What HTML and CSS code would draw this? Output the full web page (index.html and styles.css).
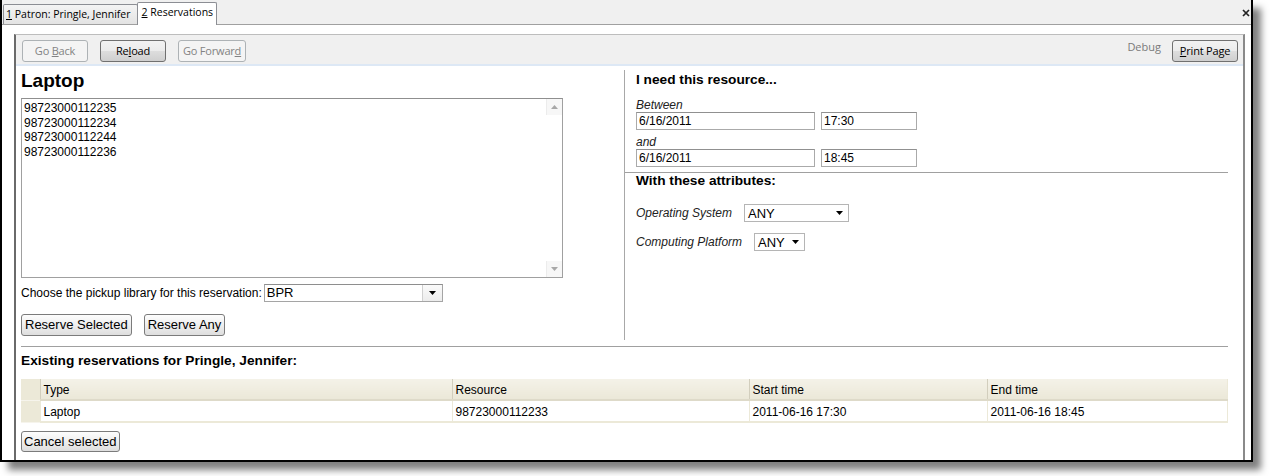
FILE: index.html
```html
<!DOCTYPE html>
<html>
<head>
<meta charset="utf-8">
<title>Reservations</title>
<link rel="stylesheet" href="styles.css">
</head>
<body>
<div class="window">
  <div class="tabstrip">
    <div class="tab"><u>1</u> Patron: Pringle, Jennifer</div>
    <div class="tab active"><u>2</u> Reservations</div>
    <svg class="close" width="8" height="8" viewBox="0 0 8 8"><path d="M1 1L7 7M7 1L1 7" stroke="#222" stroke-width="1.7" fill="none"/></svg>
  </div>
  <div class="browser">
    <div class="toolbar">
      <button class="tbtn" disabled>Go <u>B</u>ack</button>
      <button class="tbtn">Re<u>l</u>oad</button>
      <button class="tbtn" disabled>Go Forwar<u>d</u></button>
      <span class="spacer"></span>
      <span class="debug">Debug</span>
      <button class="tbtn print"><u>P</u>rint Page</button>
    </div>
    <div class="content">
      <div class="top">
        <div class="left">
          <h1 class="title">Laptop</h1>
          <div class="listbox">
            <div class="items">
              <div class="item">98723000112235</div>
              <div class="item">98723000112234</div>
              <div class="item">98723000112244</div>
              <div class="item">98723000112236</div>
            </div>
            <div class="vscroll">
              <span class="sarrow"><svg width="7" height="4" viewBox="0 0 7 4"><path d="M0 4L3.5 0L7 4Z" fill="#a8a8a8"/></svg></span>
              <span class="sarrow"><svg width="7" height="4" viewBox="0 0 7 4"><path d="M0 0L3.5 4L7 0Z" fill="#a8a8a8"/></svg></span>
            </div>
          </div>
          <div class="pickup">
            <span>Choose the pickup library for this reservation:</span>
            <div class="combo">
              <span class="combo-val">BPR</span>
              <span class="combo-btn"><svg width="7" height="4" viewBox="0 0 7 4"><path d="M0 0L3.5 4L7 0Z" fill="#000"/></svg></span>
            </div>
          </div>
          <div class="actions">
            <button class="btn">Reserve Selected</button>
            <button class="btn">Reserve Any</button>
          </div>
        </div>
        <div class="right">
          <h3 class="subhead">I need this resource...</h3>
          <div class="label">Between</div>
          <div class="fields">
            <input class="field date" value="6/16/2011" readonly>
            <input class="field time" value="17:30" readonly>
          </div>
          <div class="label and">and</div>
          <div class="fields">
            <input class="field date" value="6/16/2011" readonly>
            <input class="field time" value="18:45" readonly>
          </div>
          <div class="rule-right"></div>
          <h3 class="subhead attrs">With these attributes:</h3>
          <div class="attr os">
            <span class="label">Operating System</span>
            <div class="sel sel-os"><span>ANY</span><svg width="7" height="4" viewBox="0 0 7 4"><path d="M0 0L3.5 4L7 0Z" fill="#000"/></svg></div>
          </div>
          <div class="attr cp">
            <span class="label">Computing Platform</span>
            <div class="sel sel-cp"><span>ANY</span><svg width="7" height="4" viewBox="0 0 7 4"><path d="M0 0L3.5 4L7 0Z" fill="#000"/></svg></div>
          </div>
        </div>
      </div>
      <div class="rule"></div>
      <h3 class="subhead existing">Existing reservations for Pringle, Jennifer:</h3>
      <table class="grid">
        <colgroup>
          <col class="c0"><col class="c1"><col class="c2"><col class="c3"><col class="c4">
        </colgroup>
        <thead>
          <tr><th class="corner"></th><th>Type</th><th>Resource</th><th>Start time</th><th>End time</th></tr>
        </thead>
        <tbody>
          <tr><td class="corner"></td><td>Laptop</td><td>98723000112233</td><td>2011-06-16 17:30</td><td>2011-06-16 18:45</td></tr>
        </tbody>
      </table>
      <button class="btn cancel">Cancel selected</button>
    </div>
  </div>
</div>
</body>
</html>
```

FILE: styles.css
```css
html, body {
  margin: 0;
  padding: 0;
  background: #fff;
  height: 476px;
  overflow: hidden;
}
body {
  font-family: "Liberation Sans", Arial, sans-serif;
  font-size: 12px;
  color: #000;
}
.window {
  width: 1249px;
  height: 460px;
  border: 2px solid #000;
  border-top: 0;
  background: #fff;
  box-shadow: 8px 8px 7px rgba(0, 0, 0, 0.5);
  display: flex;
  flex-direction: column;
  overflow: hidden;
}

/* tab strip */
.tabstrip {
  height: 25px;
  box-sizing: border-box;
  background: #f0f0f0;
  border-bottom: 1px solid #a0a0a0;
  display: flex;
  align-items: flex-end;
  padding-left: 1px;
  position: relative;
  flex: none;
}
.tab {
  font-family: "Open Sans", "DejaVu Sans", sans-serif;
  font-size: 10.5px;
  height: 19px;
  line-height: 18px;
  padding: 0 6px 0 2px;
  border: 1px solid #8c8e94;
  border-bottom: 0;
  border-radius: 2px 2px 0 0;
  background: linear-gradient(#f4f4f4, #e3e3e3);
  color: #000;
  white-space: nowrap;
}
.tab.active {
  height: 22px;
  line-height: 19px;
  margin-bottom: -1px;
  margin-left: -1px;
  background: #fff;
  padding: 0 3px 0 4px;
}
.close {
  position: absolute;
  right: 1px;
  top: 9px;
}

/* browser frame */
.browser {
  flex: 1;
  margin: 9px 6px 0 12px;
  border-left: 2px solid #6a6a6a;
  border-right: 2px solid #8a8a8a;
  border-top: 1px solid #bdbdbd;
  display: flex;
  flex-direction: column;
  min-height: 0;
}
.toolbar {
  flex: none;
  background: #f0f0f0;
  border-bottom: 2px solid #dde8f5;
  padding: 5px 5px 2px 6px;
  display: flex;
  align-items: center;
  gap: 12px;
}
.tbtn {
  font-family: "Open Sans", "DejaVu Sans", sans-serif;
  font-size: 11px;
  height: 22px;
  min-width: 66px;
  padding: 0 4px;
  margin: 0;
  border: 1px solid #707070;
  border-radius: 3px;
  background: linear-gradient(#f2f2f2 0%, #ebebeb 50%, #dddddd 51%, #cfcfcf 100%);
  color: #000;
  line-height: 18px;
  letter-spacing: -0.2px;
}
.tbtn:disabled {
  border-color: #adb2b5;
  background: #f4f4f4;
  color: #838383;
}
.tbtn.print {
  margin-left: -1px;
}
.spacer {
  flex: 1;
}
.debug {
  font-family: "Open Sans", "DejaVu Sans", sans-serif;
  font-size: 11px;
  color: #7a7a7a;
  align-self: flex-start;
  margin-top: -1px;
}

/* content */
.content {
  flex: 1;
  padding: 3px 15px 0 5px;
}
.top {
  display: flex;
  height: 271px;
}
.left {
  width: 603px;
  flex: none;
}
.title {
  margin: 0;
  padding-top: 1px;
  font-size: 19px;
  line-height: 21px;
  font-weight: bold;
}
.listbox {
  margin-top: 7px;
  width: 542px;
  height: 180px;
  box-sizing: border-box;
  border: 1px solid #a0a0a0;
  border-top-color: #8f8f8f;
  display: flex;
}
.items {
  flex: 1;
  padding: 2px 2px;
  line-height: 14.7px;
}
.vscroll {
  width: 16px;
  display: flex;
  flex-direction: column;
  justify-content: space-between;
  background: #fff;
}
.sarrow {
  height: 16px;
  display: flex;
  align-items: center;
  justify-content: center;
  background: #f7f7f7;
  border-left: 1px solid #ececec;
}
.pickup {
  margin-top: 6px;
  display: flex;
  align-items: center;
  gap: 2px;
  height: 18px;
}
.combo {
  width: 179px;
  height: 18px;
  box-sizing: border-box;
  border: 1px solid #a5a5a5;
  border-top-color: #8e8e8e;
  display: flex;
}
.combo-val {
  flex: 1;
  padding-left: 2px;
  line-height: 16px;
  font-size: 13px;
}
.combo-btn {
  width: 19px;
  border-left: 1px solid #d0d0d0;
  background: linear-gradient(#fafafa, #ececec);
  display: flex;
  align-items: center;
  justify-content: center;
}
.actions {
  margin-top: 12px;
  display: flex;
  gap: 12px;
}
.btn {
  font-family: "Liberation Sans", Arial, sans-serif;
  font-size: 13px;
  height: 22px;
  padding: 0 3px;
  margin: 0;
  border: 1px solid #7b7b7b;
  border-radius: 3px;
  background: linear-gradient(#fdfdfd 0%, #f0f0f0 45%, #dedede 100%);
  color: #000;
  line-height: 18px;
}

.right {
  flex: 1;
  border-left: 1px solid #a8a8a8;
  padding-left: 11px;
  padding-top: 2px;
  margin-top: 1px;
}
.subhead {
  margin: 0;
  font-size: 13.7px;
  line-height: 16px;
  font-weight: bold;
}
.label {
  font-style: italic;
  line-height: 14px;
  color: #222;
}
.right > .label {
  margin-top: 10px;
}
.right > .label.and {
  margin-top: 5px;
}
.fields {
  display: flex;
  gap: 6px;
  height: 18px;
}
.field {
  font-family: "Liberation Sans", Arial, sans-serif;
  font-size: 12px;
  height: 18px;
  box-sizing: border-box;
  border: 1px solid #aaaaaa;
  border-top-color: #909090;
  padding: 0 2px;
  margin: 0;
  outline: none;
  color: #000;
  background: #fff;
}
.field.date {
  width: 179px;
}
.field.time {
  width: 96px;
}
.rule-right {
  margin: 5px 0 0 -11px;
  border-top: 1px solid #a0a0a0;
}
.attr {
  display: flex;
  align-items: center;
  gap: 12px;
  height: 18px;
}
.attr.os {
  margin-top: 15px;
}
.attr.cp {
  margin-top: 11px;
}
.attr .label {
  font-size: 12px;
}
.sel {
  height: 18px;
  box-sizing: border-box;
  border: 1px solid #b5b5b5;
  display: flex;
  align-items: center;
  justify-content: space-between;
  padding: 0 5px 0 3px;
  font-size: 13px;
}
.sel-os {
  width: 105px;
}
.sel-cp {
  width: 51px;
}

.rule {
  margin-top: 6px;
  border-top: 1px solid #a0a0a0;
}
.existing {
  margin-top: 6px;
}
.grid {
  margin-top: 10px;
  width: 1206px;
  table-layout: fixed;
  border-collapse: collapse;
  font-size: 12px;
}
.c0 { width: 19px; }
.c1 { width: 412px; }
.c2 { width: 297px; }
.c3 { width: 238px; }
.c4 { width: 240px; }
.grid th {
  height: 21px;
  box-sizing: border-box;
  padding: 1px 3px 0;
  text-align: left;
  font-weight: normal;
  background: linear-gradient(#f4f2e8, #ebe8d8);
  border-left: 1px solid #d2cebd;
  border-bottom: 2px solid #dedac9;
}
.grid td {
  height: 22px;
  box-sizing: border-box;
  padding: 1px 3px 0;
  border-left: 1px solid #ece9d8;
  border-bottom: 2px solid #ece9d8;
}
.grid td:last-child, .grid th:last-child {
  border-right: 1px solid #ece9d8;
}
.grid .corner {
  background: #ece9d8;
  border-left: 0;
  border-bottom: 1px solid #f6f4ec;
}
.cancel {
  margin-top: 8px;
  height: 21px;
  padding: 0 2px;
}
u {
  text-decoration: underline;
  text-underline-offset: 1px;
}
```
